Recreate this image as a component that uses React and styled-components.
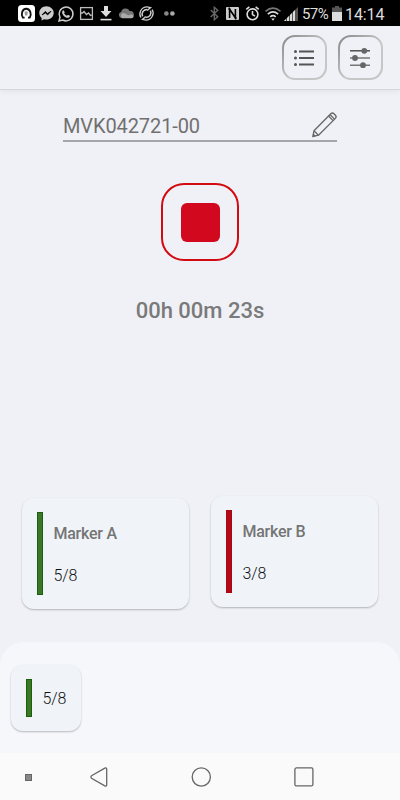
import React from "react";
import styled, { createGlobalStyle } from "styled-components";

const GlobalStyle = createGlobalStyle`
	* {
		box-sizing: border-box;
	}

	body {
		margin: 0;
		background: #f0f1f6;
		font-family: Roboto, "Noto Sans", sans-serif;
	}

	svg {
		display: block;
		flex: none;
		overflow: visible;
	}
`;

function StatusIcons() {
	return (
		<IconGroup>
			<svg width="17" height="17" viewBox="0 0 17 17">
				<rect width="17" height="17" rx="3.5" fill="#fff" />
				<path
					d="M6.6 12.6H4.8C2.8 9.5 4 3.8 8.2 3.8s5.6 5.7 3.6 8.8H10"
					fill="none"
					stroke="#111"
					strokeWidth="1.9"
				/>
				<path d="M6.5 7c.8-1 2.6-1 3.4 0l-.7 3.5h-2z" fill="#999" />
			</svg>
			<svg width="15" height="15" viewBox="0 0 15 15">
				<path
					d="M7.5.3C3.4.3.3 3.2.3 7c0 2 .9 3.7 2.3 4.9v2.7l2.5-1.3c.8.2 1.5.3 2.4.3 4 0 7.2-2.9 7.2-6.6S11.5.3 7.5.3z"
					fill="#ccc"
				/>
				<path d="M3 8.9 6.3 5.4 8.5 7.4 12 5.3 8.7 8.9 6.5 7z" fill="#000" stroke="#000" strokeWidth=".8" />
			</svg>
			<svg width="16" height="16" viewBox="0 0 16 16">
				<path d="M1 15l1-3.7A6.9 6.9 0 1 1 4.7 14z" fill="none" stroke="#ccc" strokeWidth="1.5" />
				<path
					d="M5.6 4.2l1.2 2-.7 1c.7 1.3 1.5 2 2.9 2.6l.9-1 2 .9c.1 1.4-1 2.2-2.3 2.1-2.7-.3-5.3-3-5.500-5.400-.1-1 .5-2.100 1.500-2.200z"
					fill="#ccc"
				/>
			</svg>
			<svg width="13" height="13" viewBox="0 0 13 13" fill="none" stroke="#bbb" strokeWidth="1.3">
				<rect x=".6" y=".6" width="11.8" height="11.8" />
				<path d="M1 6h1.500l1.500-1.500 2.500 3L8.500 6l2 2.500 1.500-.5" />
			</svg>
			<svg width="12" height="15" viewBox="0 0 12 15" fill="#ddd">
				<path d="M4 0h4v5h3.5L6 11 .5 5H4z" />
				<path d="M.5 12.8h11v1.6H.5z" />
			</svg>
			<svg width="16" height="11" viewBox="0 0 16 11">
				<path d="M4 10a3 3 0 0 1-.8-5.9A4.5 4.5 0 0 1 11.6 3a3.4 3.4 0 0 1 1.4 7z" fill="#777" />
				<path d="M4 10.2a3.5 3.5 0 0 1 .5-5.3c2 0 4 1.2 5.8 2.5 1.6-1.5 5-1.2 5.2.8 0 1-.7 2-2 2z" fill="#aaa" />
			</svg>
			<svg width="15" height="15" viewBox="0 0 15 15" fill="none" stroke="#ccc">
				<path d="M1.8 11.5C-.8 7 2.5.9 8 .9M13.2 3.5c2.6 4.5-.7 10.6-6.2 10.6" strokeWidth="1.3" />
				<path d="M3.6 10.4C1.9 6.8 4.5 3.5 8.2 3.5M11.4 4.6c1.7 3.6-.9 6.9-4.6 6.9" strokeWidth="1.6" />
				<path d="M8 .9l3.5.7L8.2 4.5M7 14.1l-3.5-.7 3.3-2.9" strokeWidth="1.4" />
			</svg>
			<svg width="11" height="5" viewBox="0 0 11 5">
				<circle cx="2.4" cy="2.5" r="2.3" fill="#888" />
				<circle cx="8.4" cy="2.5" r="2.3" fill="#aaa" />
			</svg>
		</IconGroup>
	);
}

function SystemIcons() {
	return (
		<SystemGroup>
			<svg width="9" height="15" viewBox="0 0 9 15" fill="none" stroke="#666" strokeWidth="1.4">
				<path d="M.7 4l7 6.7-3.4 3V1.3l3.4 3L.7 11" />
			</svg>
			<svg width="13" height="13" viewBox="0 0 13 13">
				<rect width="13" height="13" rx="1" fill="#ccc" />
				<path d="M3.6 11V2.2L9.4 10.8V2" fill="none" stroke="#000" strokeWidth="1.6" />
				<path d="M2 2h2.5M8.5 11H11" stroke="#000" />
			</svg>
			<svg width="13" height="15" viewBox="0 0 13 15" fill="none" stroke="#ddd" strokeWidth="1.6">
				<circle cx="6.5" cy="8.3" r="5.4" />
				<path d="M6.5 5v3.6l2.5 1.5M.3 3.3L3.3.8M12.7 3.3L9.7.8" />
			</svg>
			<svg width="16" height="14" viewBox="0 0 16 14" fill="none" strokeWidth="1.6">
				<path d="M.5 4.3Q8-2.2 15.5 4.3" stroke="#777" />
				<path d="M2.8 7.2q5.2-4.5 10.4 0M5.2 9.8q2.8-2.3 5.6 0" stroke="#ddd" />
				<path d="M6.2 11.5h3.6L8 13.7z" fill="#ddd" />
			</svg>
			<svg width="14" height="14" viewBox="0 0 14 14">
				<path d="M0 14L14 0v14z" fill="#555" />
				<path d="M0 14l2-2v2zM3 11l2-2v5H3zM6 8l2-2v8H6zM9 5l2-2v11H9z" fill="#ddd" />
			</svg>
			<Percent>57%</Percent>
			<svg width="10" height="15" viewBox="0 0 10 15">
				<path d="M3 0h4v1.5h3V6H0V1.5h3z" fill="#555" />
				<path d="M0 6h10v9H0z" fill="#ddd" />
			</svg>
			<Clock>14:14</Clock>
		</SystemGroup>
	);
}

function Header() {
	return (
		<Toolbar>
			<ToolButton aria-label="List">
				<svg width="21" height="16" viewBox="0 0 21 16" stroke="#555" strokeWidth="1.9">
					<path d="M5 1.5h15M5 8h15M5 14.5h15" />
					<g fill="#555" stroke="none">
						<circle cx="1.5" cy="1.5" r="1.5" />
						<circle cx="1.5" cy="8" r="1.5" />
						<circle cx="1.5" cy="14.5" r="1.5" />
					</g>
				</svg>
			</ToolButton>
			<ToolButton aria-label="Settings">
				<svg width="21" height="20" viewBox="0 0 21 20" fill="#666" stroke="#777" strokeWidth="1.4">
					<path d="M0 2.8h20" stroke="#444" />
					<path d="M0 10h20M0 17.2h20" />
					<g stroke="none">
						<circle cx="14.3" cy="2.8" r="2.9" />
						<circle cx="5" cy="10" r="2.9" />
						<circle cx="13" cy="17.2" r="2.9" />
					</g>
				</svg>
			</ToolButton>
		</Toolbar>
	);
}

function Marker({ name, value, color }) {
	return (
		<Card>
			<Bar $color={color} />
			<MarkerText>
				<Name>{name}</Name>
				<Value>{value}</Value>
			</MarkerText>
		</Card>
	);
}

function App() {
	return (
		<Phone>
			<GlobalStyle />
			<StatusBar>
				<StatusIcons />
				<SystemIcons />
			</StatusBar>
			<Header />
			<Recorder>
				<TitleField>
					<Title>MVK042721-00</Title>
					<svg width="25" height="26" viewBox="0 0 25 26" fill="none" stroke="#666" strokeWidth="1.3" strokeLinejoin="round">
						<path d="M.8 24.5L2 18.8 18.8 1.7Q20.5.2 22 1.7l1.4 1.5q1.5 1.6 0 3.2L6.5 23.2z" />
						<path d="M2 18.8l4.5 4.4M16.5 4l4.6 4.6M18 2.5l4.6 4.6M1.3 22.3l1.7 1.7" />
					</svg>
				</TitleField>
				<StopButton aria-label="Stop">
					<StopSquare />
				</StopButton>
				<Timer>00h 00m 23s</Timer>
			</Recorder>
			<Markers>
				<Marker name="Marker A" value="5/8" color="green" />
				<Marker name="Marker B" value="3/8" color="red" />
			</Markers>
			<Tray>
				<SmallCard>
					<Bar $color="green" />
					<Value>5/8</Value>
				</SmallCard>
			</Tray>
			<NavBar>
				<Dot />
				<svg width="18" height="20" viewBox="0 0 18 20" fill="none" stroke="#666" strokeWidth="1.3">
					<path d="M1.5 8.7L14.8 1.1Q16.7.3 16.7 2.3v15.4q0 2-1.9 1.2L1.5 11.3Q.2 10 1.5 8.7z" />
				</svg>
				<svg width="20" height="20" viewBox="0 0 20 20" fill="none" stroke="#666" strokeWidth="1.3">
					<circle cx="10.3" cy="10" r="9.1" />
				</svg>
				<svg width="20" height="20" viewBox="0 0 20 20" fill="none" stroke="#666" strokeWidth="1.3">
					<rect x=".9" y=".9" width="18" height="18" rx="1.5" />
				</svg>
			</NavBar>
		</Phone>
	);
}

export default App;

const Phone = styled.div`
	display: flex;
	flex-direction: column;
	width: 400px;
	height: 800px;
	overflow: hidden;
	background: #f0f1f6;
`;
const StatusBar = styled.div`
	display: flex;
	justify-content: space-between;
	height: 26px;
	padding: 0 16px 0 18px;
	background: #000;
`;
const IconGroup = styled.div`
	display: flex;
	align-items: center;
	height: 27px;

	svg:nth-child(2) {
		margin-left: 4px;
	}
	svg:nth-child(3) {
		margin-left: 4px;
	}
	svg:nth-child(4) {
		margin-left: 6px;
	}
	svg:nth-child(5) {
		margin-left: 7px;
	}
	svg:nth-child(6) {
		margin-left: 6px;
	}
	svg:nth-child(7) {
		margin-left: 5px;
	}
	svg:nth-child(8) {
		margin-left: 10px;
	}
`;
const SystemGroup = styled.div`
	display: flex;
	align-items: center;
	height: 27px;

	svg + svg {
		margin-left: 7px;
	}
	svg:nth-child(4) {
		margin-left: 6px;
	}
	svg:nth-child(5) {
		margin-left: 3px;
	}
`;
const Percent = styled.span`
	width: 27px;
	margin: 1px 3px 0 4px;
	color: #ddd;
	font-size: 15px;
	letter-spacing: -0.6px;
	white-space: nowrap;
`;
const Clock = styled.span`
	width: 39px;
	margin: 1px 0 0 3px;
	color: #ddd;
	font-size: 16px;
	letter-spacing: -0.1px;
	white-space: nowrap;
`;
const Toolbar = styled.div`
	display: flex;
	flex: none;
	justify-content: flex-end;
	gap: 11px;
	height: 64px;
	padding: 9px 17px 0 0;
	border-bottom: 1px solid #d6d7db;
	box-shadow: 0 1px 5px rgba(100, 100, 120, 0.1);
`;
const ToolButton = styled.button`
	display: flex;
	align-items: center;
	justify-content: center;
	width: 45px;
	height: 45px;
	padding: 0;
	border: 2px solid transparent;
	border-radius: 13px;
	background:
		linear-gradient(#f0f1f6, #f0f1f6) padding-box,
		linear-gradient(135deg, #858585, #c8c8c8 55%, #c4c4c4) border-box;
`;
const Recorder = styled.div`
	display: flex;
	flex-direction: column;
	align-items: center;
	height: 406px;
	padding-top: 20px;
`;
const TitleField = styled.div`
	display: flex;
	justify-content: space-between;
	width: 274px;
	height: 32px;
	padding: 2px 0 0;
	border-bottom: 2px solid #a6a6aa;
`;
const Title = styled.span`
	padding-top: 2px;
	color: #707070;
	font-size: 20px;
	letter-spacing: -0.1px;
	line-height: 24px;
`;
const StopButton = styled.button`
	display: flex;
	align-items: center;
	justify-content: center;
	width: 78px;
	height: 78px;
	margin-top: 41px;
	padding: 0;
	border: 2px solid #d20a11;
	border-radius: 23px;
	background: transparent;
`;
const StopSquare = styled.span`
	width: 39px;
	height: 39px;
	border-radius: 6px;
	background: #d2091e;
`;
const Timer = styled.div`
	margin-top: 36px;
	color: #7a7a7a;
	font-size: 22px;
	font-weight: 500;
	line-height: 28px;
`;
const Markers = styled.div`
	display: flex;
	gap: 22px;
	height: 146px;
	padding: 2px 22px 0;

	> :last-child {
		margin-top: -2px;
	}
`;
const Card = styled.div`
	display: flex;
	gap: 10.5px;
	width: 167px;
	height: 111px;
	padding: 14px 15px;
	border-radius: 12px;
	background: #f0f4f8;
	box-shadow: 0 1px 2px rgba(0, 0, 0, 0.26);
`;
const Bar = styled.div`
	flex: none;
	width: 6px;
	border: 1px solid ${({ $color }) => ($color === "green" ? "#17610e" : "#a90812")};
	background: ${({ $color }) => ($color === "green" ? "#3b7725" : "#ae0b16")};
`;
const MarkerText = styled.div`
	display: flex;
	flex-direction: column;
	gap: 22px;
	padding-top: 12px;
`;
const Name = styled.span`
	color: #757575;
	font-size: 16px;
	font-weight: 500;
	letter-spacing: -0.25px;
	line-height: 20px;
`;
const Value = styled.span`
	color: #111;
	font-size: 16px;
	font-weight: 300;
	letter-spacing: -0.1px;
	line-height: 20px;
`;
const Tray = styled.div`
	height: 111px;
	padding: 23px 11px 0;
	border-radius: 24px 24px 0 0;
	background: #f5f7fa;
`;
const SmallCard = styled(Card)`
	align-items: center;
	width: 70px;
	height: 66px;

	${Bar} {
		height: 38px;
	}
	${Value} {
		padding-top: 1px;
	}
`;
const NavBar = styled.div`
	display: flex;
	align-items: center;
	height: 47px;
	padding: 1px 0 0 25px;
	background: #fafafa;

	svg {
		margin-left: 58px;
	}
	svg + svg {
		margin-left: 83px;
	}
`;
const Dot = styled.div`
	width: 7px;
	height: 7px;
	border: 1px solid #666;
	background: #888;
`;
